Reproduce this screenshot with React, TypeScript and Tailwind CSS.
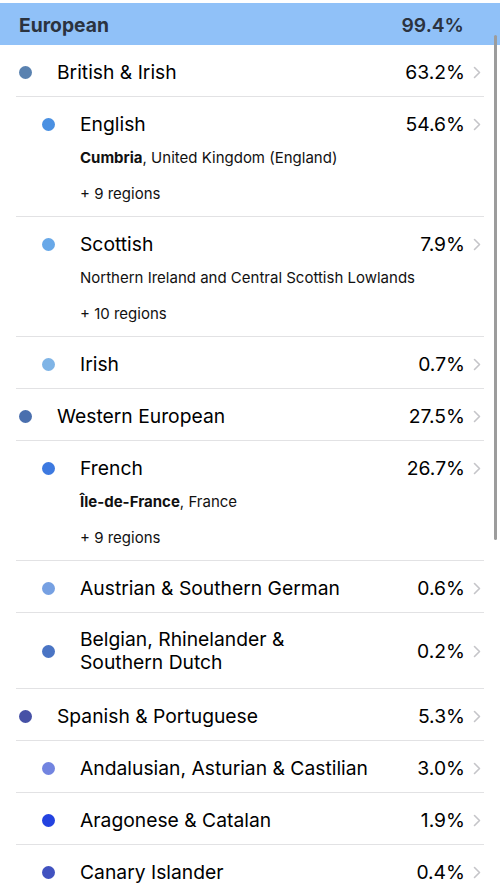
import React from "react";

type Row = {
  name: string[];
  pct: string;
  level: 1 | 2;
  color: string;
  bold?: string;
  sub?: string;
  regions?: string;
};

const rows: Row[] = [
  { name: ["British & Irish"], pct: "63.2%", level: 1, color: "#5a82b0" },
  { name: ["English"], pct: "54.6%", level: 2, color: "#4a90e2", bold: "Cumbria", sub: ", United Kingdom (England)", regions: "+ 9 regions" },
  { name: ["Scottish"], pct: "7.9%", level: 2, color: "#68a8e8", sub: "Northern Ireland and Central Scottish Lowlands", regions: "+ 10 regions" },
  { name: ["Irish"], pct: "0.7%", level: 2, color: "#7fb4e6" },
  { name: ["Western European"], pct: "27.5%", level: 1, color: "#4a6fae" },
  { name: ["French"], pct: "26.7%", level: 2, color: "#3d79e0", bold: "Île-de-France", sub: ", France", regions: "+ 9 regions" },
  { name: ["Austrian & Southern German"], pct: "0.6%", level: 2, color: "#76a0e2" },
  { name: ["Belgian, Rhinelander &", "Southern Dutch"], pct: "0.2%", level: 2, color: "#4a74c4" },
  { name: ["Spanish & Portuguese"], pct: "5.3%", level: 1, color: "#4651a6" },
  { name: ["Andalusian, Asturian & Castilian"], pct: "3.0%", level: 2, color: "#7284e0" },
  { name: ["Aragonese & Catalan"], pct: "1.9%", level: 2, color: "#2342e0" },
  { name: ["Canary Islander"], pct: "0.4%", level: 2, color: "#4152c0" },
];

function Chevron() {
  return (
    <svg width="8" height="13" viewBox="0 0 8 13" className="ml-[8px] mr-[3px] shrink-0">
      <path d="M1.5 1.5 L6.5 6.5 L1.5 11.5" fill="none" stroke="#c5c5c9" strokeWidth="1.6" strokeLinecap="round" strokeLinejoin="round" />
    </svg>
  );
}

function ListRow({ r }: { r: Row }) {
  const multi = r.name.length > 1;
  return (
    <div className={`mx-4 border-b border-[#e2e2e4] pt-[15px] ${multi ? "pb-[14px]" : "pb-[12px]"}`}>
      <div className="flex items-center">
        <div className={`flex items-center ${r.level === 1 ? "pl-[3px]" : "pl-[26px]"}`}>
          <span className="w-[13px] h-[13px] rounded-full shrink-0" style={{ backgroundColor: r.color }} />
        </div>
        <div className="ml-[25px] flex-1 text-[19.3px] leading-[23px] text-black">
          {r.name.map((n) => (
            <div key={n}>{n}</div>
          ))}
        </div>
        <div className="text-[19.3px] leading-[24px] text-black">{r.pct}</div>
        <Chevron />
      </div>
      {(r.sub || r.bold) && (
        <div className="pl-[64px] mt-[12px] text-[15px] leading-[20px] text-[#111]">
          {r.bold && <span className="font-bold">{r.bold}</span>}
          {r.sub}
        </div>
      )}
      {r.regions && (
        <div className="pl-[64px] mt-[16px] text-[15px] leading-[20px] text-[#111]">{r.regions}</div>
      )}
    </div>
  );
}

export default function App() {
  return (
    <div className="relative w-[500px] h-[883px] overflow-hidden bg-white pt-[3px]" style={{ fontFamily: "Inter, 'Noto Sans', sans-serif" }}>
      <div className="h-[42px] bg-[#90c1f8] flex items-center pt-[3px] pl-[19px] pr-[36px]">
        <div className="flex-1 text-[19.3px] font-bold text-[#2b333f]">European</div>
        <div className="text-[19.3px] font-semibold text-[#2b333f]">99.4%</div>
      </div>
      <div>
        {rows.map((r) => (
          <ListRow key={r.name.join(" ")} r={r} />
        ))}
      </div>
      <div className="absolute left-[494px] top-[35px] w-[3px] h-[505px] rounded-full bg-[#9c9c9c]" />
    </div>
  );
}
